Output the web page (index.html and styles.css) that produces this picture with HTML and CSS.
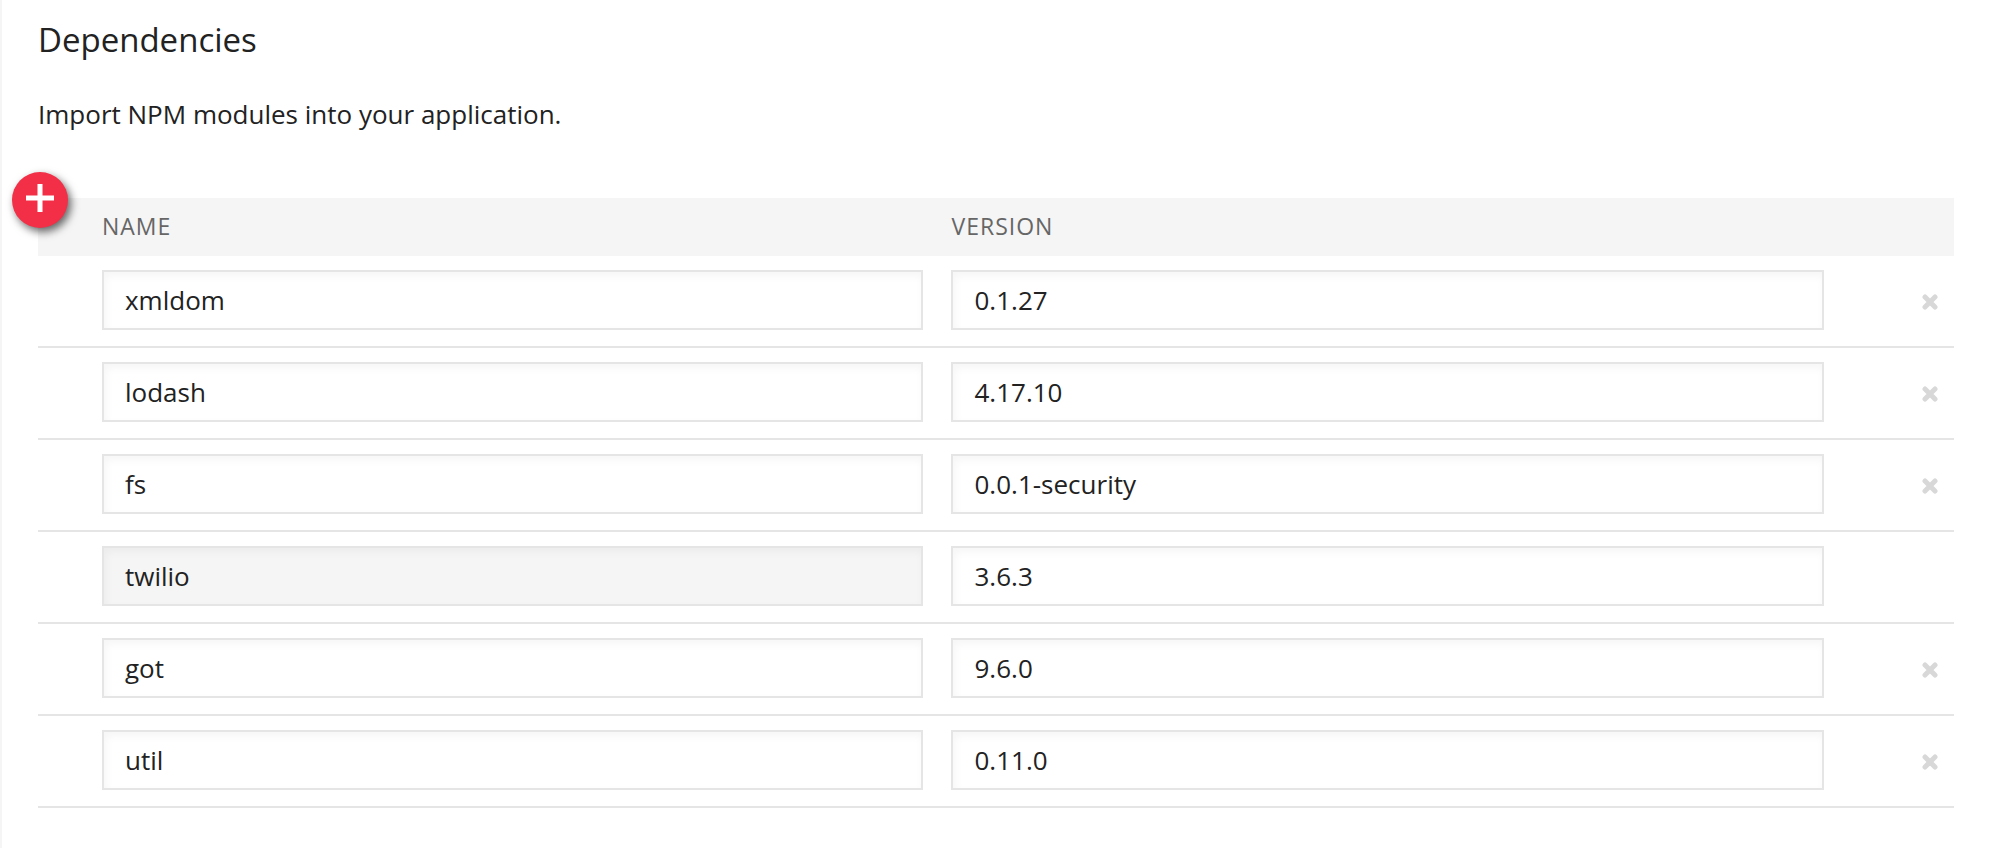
FILE: index.html
```html
<!DOCTYPE html>
<html lang="en">
<head>
    <meta charset="UTF-8">
    <meta name="viewport" content="width=device-width, initial-scale=1.0">
    <title>Dependencies</title>
    <link rel="stylesheet" href="styles.css">
</head>
<body>
    <svg class="sprite" aria-hidden="true">
        <symbol id="icon-remove" viewBox="0 0 16 16">
            <path d="M3 3 L13 13 M13 3 L3 13" fill="none" stroke="currentColor" stroke-width="5" stroke-linecap="round"/>
        </symbol>
    </svg>

    <main class="container">
        <h1>Dependencies</h1>
        <p class="intro">Import NPM modules into your application.</p>

        <div class="table-wrap">
            <table class="modules">
                <colgroup>
                    <col class="col-spacer">
                    <col class="col-name">
                    <col class="col-version">
                    <col class="col-remove">
                </colgroup>
                <thead>
                    <tr>
                        <td></td>
                        <th id="name" scope="col">NAME</th>
                        <th id="version" scope="col">VERSION</th>
                        <td></td>
                    </tr>
                </thead>
                <tbody>
                    <tr>
                        <td></td>
                        <td><input type="text" aria-labelledby="name" value="xmldom"></td>
                        <td><input type="text" aria-labelledby="version" value="0.1.27"></td>
                        <td class="remove"><button type="button" class="btn-remove" aria-label="Remove xmldom"><svg><use href="#icon-remove"/></svg></button></td>
                    </tr>
                    <tr>
                        <td></td>
                        <td><input type="text" aria-labelledby="name" value="lodash"></td>
                        <td><input type="text" aria-labelledby="version" value="4.17.10"></td>
                        <td class="remove"><button type="button" class="btn-remove" aria-label="Remove lodash"><svg><use href="#icon-remove"/></svg></button></td>
                    </tr>
                    <tr>
                        <td></td>
                        <td><input type="text" aria-labelledby="name" value="fs"></td>
                        <td><input type="text" aria-labelledby="version" value="0.0.1-security"></td>
                        <td class="remove"><button type="button" class="btn-remove" aria-label="Remove fs"><svg><use href="#icon-remove"/></svg></button></td>
                    </tr>
                    <!-- twilio is always installed, only its version can change -->
                    <tr>
                        <td></td>
                        <td><input type="text" aria-labelledby="name" value="twilio" readonly></td>
                        <td><input type="text" aria-labelledby="version" value="3.6.3"></td>
                        <td></td>
                    </tr>
                    <tr>
                        <td></td>
                        <td><input type="text" aria-labelledby="name" value="got"></td>
                        <td><input type="text" aria-labelledby="version" value="9.6.0"></td>
                        <td class="remove"><button type="button" class="btn-remove" aria-label="Remove got"><svg><use href="#icon-remove"/></svg></button></td>
                    </tr>
                    <tr>
                        <td></td>
                        <td><input type="text" aria-labelledby="name" value="util"></td>
                        <td><input type="text" aria-labelledby="version" value="0.11.0"></td>
                        <td class="remove"><button type="button" class="btn-remove" aria-label="Remove util"><svg><use href="#icon-remove"/></svg></button></td>
                    </tr>
                </tbody>
            </table>
            <button type="button" class="btn-add" aria-label="Add module">
                <svg viewBox="0 0 28 28"><path d="M0 14 H28 M14 0 V28" stroke="currentColor" stroke-width="5"/></svg>
            </button>
        </div>
    </main>
</body>
</html>
```
FILE: styles.css
```css
* {
    box-sizing: border-box;
}
body {
    margin: 0;
    background-color: #fff;
    color: #222;
    font-family: 'Open Sans', 'Noto Sans', sans-serif;
    font-size: 26px;
}
.sprite {
    display: none;
}
.container {
    min-height: 100vh;
    padding: 20px 52px 40px 36px;
    border-left: 2px solid #f5f5f5;
}
h1 {
    margin: 0;
    font-size: 33px;
    font-weight: 400;
    line-height: 40px;
}
.intro {
    margin: 38px 0 68px;
    line-height: 32px;
}
.table-wrap {
    position: relative;
}
.modules {
    width: 100%;
    table-layout: fixed;
    border-collapse: separate;
    border-spacing: 0;
}
.col-spacer {
    width: 50px;
}
.col-version {
    width: 47%;
}
.col-remove {
    width: 116px;
}
.modules thead {
    background-color: #f5f5f5;
}
.modules th {
    height: 58px;
    padding: 0 14px 2px;
    color: #666;
    font-size: 23px;
    font-weight: 400;
    letter-spacing: 1px;
    text-align: left;
}
.modules tbody td {
    padding: 14px 14px 16px;
    border-bottom: 2px solid #e5e5e5;
}
.modules input {
    display: block;
    width: 100%;
    height: 60px;
    padding: 0 21px;
    border: 2px solid #e5e5e5;
    border-radius: 0;
    background-color: #fff;
    box-shadow: inset 2px 4px 8px rgba(0, 0, 0, 0.04);
    color: #222;
    font: inherit;
}
.modules input:read-only {
    background-color: #f5f5f5;
}
.modules .remove {
    text-align: right;
}
.btn-remove {
    padding: 2px;
    border: none;
    background: none;
    color: #d8d8d8;
    cursor: pointer;
}
.btn-remove:hover {
    color: #999;
}
.btn-remove svg {
    display: block;
    width: 16px;
    height: 16px;
}
/* sits on the corner of the table header */
.btn-add {
    position: absolute;
    top: -26px;
    left: -26px;
    display: flex;
    justify-content: center;
    width: 56px;
    height: 56px;
    padding: 12px;
    border: none;
    border-radius: 50%;
    background-color: #f22f46;
    box-shadow: 3px 4px 8px rgba(0, 0, 0, 0.6);
    color: #fff;
    cursor: pointer;
}
.btn-add svg {
    width: 28px;
    height: 28px;
}
```
